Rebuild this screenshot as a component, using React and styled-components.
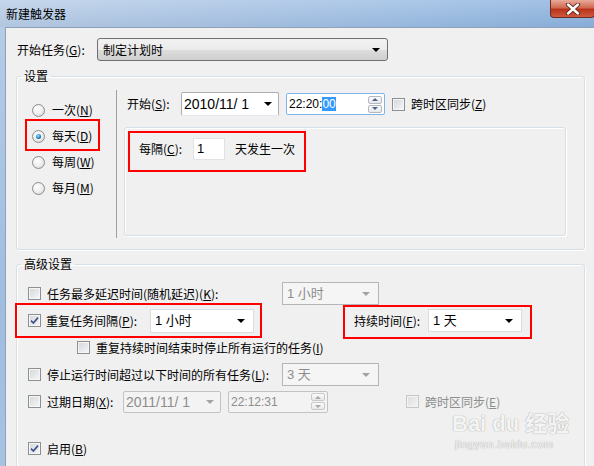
import React from 'react'
import styled, { createGlobalStyle } from 'styled-components'

const Global = createGlobalStyle`
  html, body { margin: 0; padding: 0; background: #f0f0f0; }
  body {
    font-family: "Noto Sans CJK SC", "Noto Sans", sans-serif;
    font-size: 12px;
    line-height: 16px;
    color: #000;
  }
`

const Win = styled.div`
  width: 594px;
  height: 466px;
  overflow: hidden;
  position: relative;
  display: flex;
  flex-direction: column;
  background: #f0f0f0;
`

const TitleBar = styled.div`
  height: 27px;
  flex-shrink: 0;
  display: flex;
  align-items: center;
  justify-content: space-between;
  padding-left: 6px;
  background:
    linear-gradient(180deg, rgba(255,255,255,0.15), rgba(0,40,90,0.06)),
    linear-gradient(90deg, #bcd0e8 0%, #aec7e6 35%, #9ebfe4 70%, #8fb4df 100%);
`

const Title = styled.span`
  font-size: 12px;
  color: #000;
`

const Close = styled.div`
  align-self: flex-start;
  width: 45px;
  height: 18px;
  flex-shrink: 0;
  box-sizing: border-box;
  margin-right: -1px;
  border: 1px solid #6b2a22;
  border-top: none;
  border-radius: 0 0 4px 4px;
  background: linear-gradient(180deg, #e9a99a 0%, #d06a52 45%, #b8321a 55%, #cf5a3d 100%);
  display: flex;
  align-items: center;
  justify-content: center;
`

const Frame = styled.div`
  flex: 1;
  display: flex;
`

const Edge = styled.div`
  width: 5px;
  flex-shrink: 0;
  background: linear-gradient(180deg, #b5cbe6, #9fbde0 60%, #a9c3e2);
`

const Body = styled.div`
  flex: 1;
  background: #f0f0f0;
  border-left: 1px solid #8fa1b8;
  border-top: 1px solid #8fa1b8;
`

const TaskRow = styled.div`
  display: flex;
  align-items: center;
  height: 23px;
  margin: 10px 0 0 11px;
`

const Label = styled.span`
  display: inline-block;
  flex-shrink: 0;
  white-space: nowrap;
  width: ${p => (p.$w ? `${p.$w}px` : 'auto')};
  margin-left: ${p => p.$ml || 0}px;
  color: ${p => (p.$off ? '#8d8d8d' : '#000')};
`

const Combo = styled.div`
  width: ${p => p.$w}px;
  height: ${p => p.$h || 23}px;
  box-sizing: border-box;
  flex-shrink: 0;
  display: flex;
  align-items: center;
  justify-content: space-between;
  padding: 0 7px 0 5px;
  border: 1px solid #707070;
  border-radius: 3px;
  background: linear-gradient(180deg, #f2f2f2 0%, #ebebeb 50%, #dddddd 51%, #cfcfcf 100%);
`

const ListBox = styled.div`
  width: ${p => p.$w}px;
  height: ${p => p.$h || 23}px;
  box-sizing: border-box;
  flex-shrink: 0;
  display: flex;
  align-items: center;
  justify-content: space-between;
  padding: 0 8px 0 4px;
  border: 1px solid ${p => (p.$off ? '#b5b5b5' : '#dcdcdc')};
  background: ${p => (p.$off ? '#f5f5f5' : '#fff')};
  color: ${p => (p.$off ? '#8d8d8d' : '#000')};
  font-size: 13px;
  font-family: "Liberation Sans", "Noto Sans CJK SC", sans-serif;
`

const Arrow = styled.span`
  width: 0;
  height: 0;
  flex-shrink: 0;
  border-left: 4px solid transparent;
  border-right: 4px solid transparent;
  border-top: 4px solid ${p => (p.$off ? '#a3a3a3' : '#000')};
`

const Field = styled.div`
  width: ${p => p.$w}px;
  height: ${p => p.$h}px;
  box-sizing: border-box;
  flex-shrink: 0;
  display: flex;
  align-items: center;
  justify-content: space-between;
  margin-left: ${p => p.$ml || 0}px;
  padding: 0 ${p => p.$pr ?? 6}px 0 2px;
  background: ${p => (p.$off ? '#f3f3f3' : '#fff')};
  border: 1px solid ${p => (p.$focus ? '#7eb4ea' : p.$off ? '#c3c3c3' : '#abadb3')};
  border-bottom-color: ${p => (p.$focus ? '#7eb4ea' : p.$off ? '#c3c3c3' : '#e3e9ef')};
  border-radius: 2px;
  color: ${p => (p.$off ? '#8d8d8d' : '#000')};
  font-family: "Liberation Sans", sans-serif;
  font-size: ${p => p.$fs}px;
`

const Sel = styled.span`
  background: #3399ff;
  color: #fff;
`

const Spin = styled.div`
  display: flex;
  flex-direction: column;
  gap: 1px;
`

const SpinBtn = styled.div`
  width: 14px;
  height: 8px;
  box-sizing: border-box;
  border: 1px solid ${p => (p.$off ? '#cacaca' : '#b3b8c2')};
  border-radius: 2px;
  background: linear-gradient(180deg, #fbfbfb, #e6e8ec);
  display: flex;
  align-items: center;
  justify-content: center;
`

const SpinTri = styled.span`
  width: 0;
  height: 0;
  border-left: 3px solid transparent;
  border-right: 3px solid transparent;
  ${p => (p.$up ? 'border-bottom' : 'border-top')}: 3px solid ${p => (p.$off ? '#a8a8a8' : '#4d6185')};
`

const Group = styled.fieldset`
  margin: ${p => p.$mt}px 0 0 10px;
  width: 569px;
  min-width: 0;
  box-sizing: border-box;
  padding: 0 0 ${p => p.$pb || 0}px 0;
  border: 1px solid #d5dfe5;
  border-radius: 3px;
  box-shadow: inset 1px 1px 0 #fff, 1px 1px 0 #fff;
`

const Legend = styled.legend`
  margin-left: 4px;
  padding: 0 3px;
  line-height: 16px;
  font-size: 12px;
`

const Split = styled.div`
  display: flex;
`

const RadioCol = styled.div`
  width: 100px;
  height: 148px;
  box-sizing: border-box;
  margin: 6px 0 11px 0;
  padding: 7px 0 0 15px;
  border-right: 1px solid #a0a0a0;
  display: flex;
  flex-direction: column;
  align-items: flex-start;
`

const Opt = styled.div`
  display: flex;
  align-items: center;
  height: 26px;
  gap: 7px;
  white-space: nowrap;
`

const Radio = styled.span`
  position: relative;
  width: 13px;
  height: 13px;
  flex-shrink: 0;
  box-sizing: border-box;
  border-radius: 50%;
  border: 1px solid #8c8c8c;
  background: radial-gradient(circle at 40% 35%, #ffffff 0%, #ececec 55%, #cfcfcf 100%);
  &::after {
    content: '';
    display: ${p => (p.$on ? 'block' : 'none')};
    position: absolute;
    left: 3px;
    top: 3px;
    width: 5px;
    height: 5px;
    border-radius: 50%;
    background: radial-gradient(circle at 40% 35%, #9be3ff 0%, #1b78be 60%, #0a4d86 100%);
  }
`

const Right = styled.div`
  flex: 1;
  padding: 8px 0 0 10px;
`

const StartRow = styled.div`
  display: flex;
  align-items: center;
  height: 24px;
`

const InnerBox = styled.div`
  width: 442px;
  height: 109px;
  box-sizing: border-box;
  margin: 11px 0 0 -3px;
  padding: 10px 0 0 14px;
  border: 1px solid #d5dfe5;
  border-radius: 3px;
  box-shadow: inset 1px 1px 0 #fff, 1px 1px 0 #fff;
  display: flex;
  flex-direction: column;
  align-items: flex-start;
`

const Mark = styled.div`
  display: flex;
  align-items: center;
  flex-shrink: 0;
  border: 2px solid #ff0000;
  padding: ${p => p.$e.map(v => `${v - 2}px`).join(' ')};
  margin: ${p => p.$e.map(v => `${-v}px`).join(' ')};
`

const Row = styled.div`
  display: flex;
  align-items: center;
  height: ${p => p.$h || 22}px;
`

const TextBox = styled.div`
  width: 32px;
  height: 22px;
  box-sizing: border-box;
  flex-shrink: 0;
  padding-left: 3px;
  border: 1px solid #dfe3e8;
  background: #fff;
  font-family: "Liberation Sans", sans-serif;
  font-size: 13px;
  line-height: 20px;
`

const Adv = styled.div`
  padding: 8px 0 0 11px;
`

const AdvRow = styled.div`
  display: flex;
  align-items: center;
  height: 27px;
  padding-left: ${p => p.$indent || 0}px;
  margin-top: ${p => p.$mt || 0}px;
`

const Spacer = styled.span`
  width: ${p => p.$w}px;
  flex-shrink: 0;
`

const Box = styled.span`
  width: 13px;
  height: 13px;
  flex-shrink: 0;
  box-sizing: border-box;
  display: inline-flex;
  border: 1px solid ${p => (p.$off ? '#b9b9b9' : '#8e8f8f')};
  background: linear-gradient(135deg, #d3d6da 0%, #f7f7f7 100%);
  box-shadow: inset 0 0 0 1px #f6f6f6;
  ${p => p.$off && 'opacity: 0.75;'}
`

const Wm = styled.div`
  position: absolute;
  left: 452px;
  top: 410px;
  pointer-events: none;
  white-space: nowrap;
  font-family: "Liberation Sans", "Noto Sans CJK SC", sans-serif;
  color: rgba(255, 255, 255, 0.9);
  text-shadow: 0 0 1px #adadad, 0 0 1px #adadad;
`

const WmBig = styled.div`
  font-size: 22px;
  font-weight: bold;
  line-height: 28px;
`

const WmSmall = styled.div`
  font-size: 11px;
  line-height: 13px;
  letter-spacing: 0.6px;
  padding-left: 3px;
`

const Check = ({ on, off }) => (
  <Box $off={off}>
    {on && (
      <svg width="11" height="11" viewBox="0 0 11 11">
        <path d="M2 5.6 L4.4 8 L9 2.6" fill="none" stroke="#3f5592" strokeWidth="1.7" />
      </svg>
    )}
  </Box>
)

const TimeField = ({ off, ...rest }) => (
  <Field $off={off} $h={22} $fs={12} $pr={2} {...rest}>
    <span>{rest.children}</span>
    <Spin>
      <SpinBtn $off={off}><SpinTri $up $off={off} /></SpinBtn>
      <SpinBtn $off={off}><SpinTri $off={off} /></SpinBtn>
    </Spin>
  </Field>
)

const Choice = ({ on, children }) => (
  <Opt>
    <Radio $on={on} />
    <span>{children}</span>
  </Opt>
)

export default function App() {
  return (
    <Win>
      <Global />
      <TitleBar>
        <Title>新建触发器</Title>
        <Close>
          <svg width="16" height="12" viewBox="0 0 16 12">
            <path d="M3 1.5 L13 10.5 M13 1.5 L3 10.5" stroke="#5a2219" strokeWidth="4.2" strokeLinecap="round" />
            <path d="M3 1.5 L13 10.5 M13 1.5 L3 10.5" stroke="#ffffff" strokeWidth="2.4" strokeLinecap="round" />
          </svg>
        </Close>
      </TitleBar>
      <Frame>
        <Edge />
        <Body>
          <TaskRow>
            <Label $w={80}>开始任务(<u>G</u>):</Label>
            <Combo $w={291}>
              <span>制定计划时</span>
              <Arrow />
            </Combo>
          </TaskRow>

          <Group $mt={7}>
            <Legend>设置</Legend>
            <Split>
              <RadioCol>
                <Choice>一次(<u>N</u>)</Choice>
                <Mark $e={[4, 8, 2, 7]}>
                  <Choice on>每天(<u>D</u>)</Choice>
                </Mark>
                <Choice>每周(<u>W</u>)</Choice>
                <Choice>每月(<u>M</u>)</Choice>
              </RadioCol>
              <Right>
                <StartRow>
                  <Label $w={54}>开始(<u>S</u>):</Label>
                  <Field $w={98} $h={24} $fs={14}>
                    <span>2010/11/ 1</span>
                    <Arrow />
                  </Field>
                  <TimeField $w={99} $ml={7} $focus>
                    22:20:<Sel>00</Sel>
                  </TimeField>
                  <Spacer $w={7} />
                  <Check />
                  <Label $ml={6}>跨时区同步(<u>Z</u>)</Label>
                </StartRow>
                <InnerBox>
                  <Mark $e={[7, 11, 12, 11]}>
                    <Row>
                      <Label $w={54}>每隔(<u>C</u>):</Label>
                      <TextBox>1</TextBox>
                      <Label $ml={10}>天发生一次</Label>
                    </Row>
                  </Mark>
                </InnerBox>
              </Right>
            </Split>
          </Group>

          <Group $mt={6} $pb={30}>
            <Legend>高级设置</Legend>
            <Adv>
              <AdvRow>
                <Check />
                <Label $ml={6} $w={235}>任务最多延迟时间(随机延迟)(<u>K</u>):</Label>
                <ListBox $w={97} $off>
                  <span>1 小时</span>
                  <Arrow $off />
                </ListBox>
              </AdvRow>
              <AdvRow>
                <Mark $e={[6, 8, 5, 13]}>
                  <Check on />
                  <Label $ml={5} $w={104}>重复任务间隔(<u>P</u>):</Label>
                  <ListBox $w={104} $h={24}>
                    <span>1 小时</span>
                    <Arrow />
                  </ListBox>
                </Mark>
                <Spacer $w={100} />
                <Mark $e={[4, 10, 7, 11]}>
                  <Label $w={74}>持续时间(<u>F</u>):</Label>
                  <ListBox $w={94}>
                    <span>1 天</span>
                    <Arrow />
                  </ListBox>
                </Mark>
              </AdvRow>
              <AdvRow $indent={49}>
                <Check />
                <Label $ml={6}>重复持续时间结束时停止所有运行的任务(<u>I</u>)</Label>
              </AdvRow>
              <AdvRow>
                <Check />
                <Label $ml={6} $w={235}>停止运行时间超过以下时间的所有任务(<u>L</u>):</Label>
                <ListBox $w={97} $off>
                  <span>3 天</span>
                  <Arrow $off />
                </ListBox>
              </AdvRow>
              <AdvRow>
                <Check />
                <Label $ml={6} $w={76}>过期日期(<u>X</u>):</Label>
                <Field $w={98} $h={22} $fs={14} $off>
                  <span>2011/11/ 1</span>
                  <Arrow $off />
                </Field>
                <TimeField $w={100} $ml={7} off>
                  22:12:31
                </TimeField>
                <Spacer $w={78} />
                <Check off />
                <Label $ml={6} $off>跨时区同步(<u>E</u>)</Label>
              </AdvRow>
              <AdvRow $mt={20}>
                <Check on />
                <Label $ml={6}>启用(<u>B</u>)</Label>
              </AdvRow>
            </Adv>
          </Group>
        </Body>
      </Frame>
      <Wm>
        <WmBig>Bai du 经验</WmBig>
        <WmSmall>jingyan.baidu.com</WmSmall>
      </Wm>
    </Win>
  )
}
